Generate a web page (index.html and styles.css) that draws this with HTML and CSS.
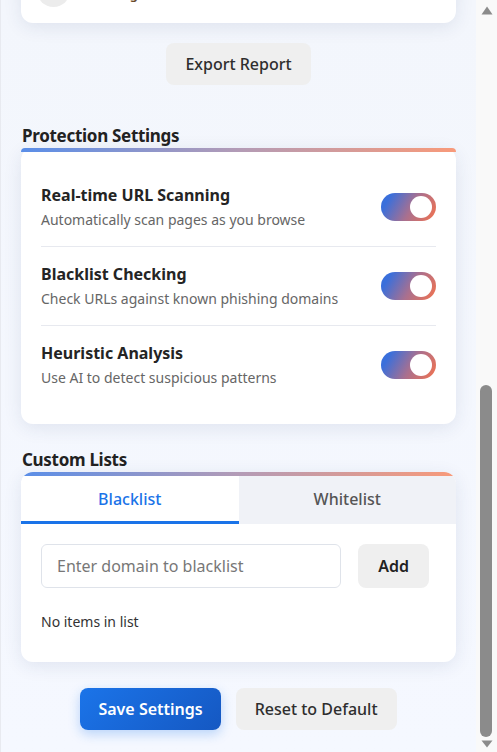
FILE: index.html
```html
<!DOCTYPE html>
<html lang="en">
<head>
<meta charset="utf-8">
<title>PhishGuard</title>
<link rel="stylesheet" href="styles.css">
</head>
<body>
<div class="scroller" id="scroller">
<div class="popup">
  <header class="header">
    <div class="brand">
      <svg class="brand-logo" width="36" height="36" viewBox="0 0 24 24"><path d="M12 2l8 3v6c0 5-3.5 9.5-8 11-4.5-1.5-8-6-8-11V5l8-3z" fill="#fff"/></svg>
      <div>
        <div class="brand-name">PhishGuard</div>
        <div class="brand-sub">Phishing protection</div>
      </div>
    </div>
  </header>

  <section class="card status-card">
    <div class="status-icon">✓</div>
    <div class="status-title">You are protected</div>
    <div class="status-sub">All protection features are active</div>
  </section>

  <div class="stats">
    <div class="stat card"><div class="stat-num">128</div><div class="stat-label">Sites scanned</div></div>
    <div class="stat card"><div class="stat-num">3</div><div class="stat-label">Threats blocked</div></div>
    <div class="stat card"><div class="stat-num">1</div><div class="stat-label">Warnings</div></div>
  </div>

  <section class="section">
    <h2 class="section-title">Recent Activity</h2>
    <div class="card activity">
      <div class="activity-item">
        <div class="activity-icon"></div>
        <div class="activity-text"><div class="activity-name">secure-login-bank.com</div><div class="activity-meta blocked">Blocked · 5 min</div></div>
      </div>
      <div class="activity-item">
        <div class="activity-icon"></div>
        <div class="activity-text"><div class="activity-name">github.com</div><div class="activity-meta safe">Safe · 20 min</div></div>
      </div>
      <div class="activity-item">
        <div class="activity-icon"></div>
        <div class="activity-text"><div class="activity-name">free-prizes-now.net</div><div class="activity-meta warn">Warning · 1 hour</div></div>
      </div>
    </div>
  </section>

  <div class="center-row export-row">
    <button class="btn btn-secondary">Export Report</button>
  </div>

  <section class="section">
    <h2 class="section-title">Protection Settings</h2>
    <div class="card settings">
      <div class="setting-row">
        <div class="setting-text">
          <div class="setting-name">Real-time URL Scanning</div>
          <div class="setting-desc">Automatically scan pages as you browse</div>
        </div>
        <label class="toggle"><input type="checkbox" checked><span class="slider"></span></label>
      </div>
      <div class="setting-row">
        <div class="setting-text">
          <div class="setting-name">Blacklist Checking</div>
          <div class="setting-desc">Check URLs against known phishing domains</div>
        </div>
        <label class="toggle"><input type="checkbox" checked><span class="slider"></span></label>
      </div>
      <div class="setting-row">
        <div class="setting-text">
          <div class="setting-name">Heuristic Analysis</div>
          <div class="setting-desc">Use AI to detect suspicious patterns</div>
        </div>
        <label class="toggle"><input type="checkbox" checked><span class="slider"></span></label>
      </div>
    </div>
  </section>

  <section class="section lists-section">
    <h2 class="section-title">Custom Lists</h2>
    <div class="card lists">
      <div class="tabs">
        <button class="tab active">Blacklist</button>
        <button class="tab">Whitelist</button>
      </div>
      <div class="tab-content">
        <div class="add-row">
          <input class="domain-input" type="text" placeholder="Enter domain to blacklist">
          <button class="btn btn-secondary btn-add">Add</button>
        </div>
        <div class="empty">No items in list</div>
      </div>
    </div>
  </section>

  <div class="center-row footer-actions">
    <button class="btn btn-primary">Save Settings</button>
    <button class="btn btn-secondary">Reset to Default</button>
  </div>
</div>
</div>
<div class="vscroll" aria-hidden="true">
  <div class="vs-btn vs-up"><svg width="12" height="9" viewBox="0 0 12 9"><path d="M6 0.5L11.5 8.5H0.5Z" fill="#8b8b8b"/></svg></div>
  <div class="vs-track"><div class="vs-thumb" style="height: 352px"></div></div>
  <div class="vs-btn vs-down"><svg width="12" height="8" viewBox="0 0 12 8"><path d="M0.5 0.5H11.5L6 7.5Z" fill="#8b8b8b"/></svg></div>
</div>
<script src="script.js"></script>
</body>
</html>
```

FILE: styles.css
```css
* { box-sizing: border-box; }
html, body { height: 100%; }
body {
  margin: 0;
  overflow: hidden;
  display: flex;
  font-family: "Noto Sans", "Open Sans", sans-serif;
  color: #2a2a2a;
  background: #f4f7fd;
}
.scroller {
  flex: 1;
  min-width: 0;
  height: 100vh;
  overflow-y: auto;
  scrollbar-width: none;
  border-left: 1px solid #e8eaf0;
  background: linear-gradient(180deg, #f3f6fc 0%, #f5f8ff 100%);
}
.scroller::-webkit-scrollbar { display: none; }

.vscroll {
  flex: none;
  width: 21px;
  height: 100vh;
  display: flex;
  flex-direction: column;
  background: #f9f9f9;
}
.vs-btn { flex: none; display: flex; justify-content: center; padding-left: 1px; }
.vs-up { height: 16px; align-items: flex-start; padding-top: 6px; }
.vs-down { height: 15px; align-items: flex-start; padding-top: 3px; }
.vs-track {
  flex: 1;
  display: flex;
  flex-direction: column;
  justify-content: flex-end;
  padding: 0 5px 0 4px;
}
.vs-thumb { border-radius: 6px; background: #8b8b8b; }

.popup {
  display: flex;
  flex-direction: column;
  padding: 20px 20px 22px 20px;
}

.header {
  background: linear-gradient(135deg, #1a73e8, #f0876a);
  border-radius: 12px;
  padding: 20px;
  color: #fff;
  margin-bottom: 20px;
}
.brand { display: flex; align-items: center; gap: 12px; }
.brand-name { font-size: 20px; font-weight: 700; line-height: 26px; }
.brand-sub { font-size: 13px; opacity: .9; line-height: 18px; }

.card {
  position: relative;
  background: #fff;
  border-radius: 12px;
  box-shadow: 0 4px 18px rgba(40, 60, 110, 0.10);
}
.card::before {
  content: "";
  position: absolute;
  top: 0; left: 0; right: 0;
  height: 4px;
  border-radius: 12px 12px 0 0;
  background: linear-gradient(90deg, #5a8ee8 0%, #b39bb6 50%, #f89a7a 100%);
}
.status-card { padding: 28px 20px 24px; text-align: center; margin-bottom: 20px; }
.status-icon {
  width: 56px; height: 56px; margin: 0 auto 12px; border-radius: 50%;
  background: #e6f4ea; color: #1e8e3e; font-size: 28px; line-height: 56px;
}
.status-title { font-size: 18px; font-weight: 700; line-height: 24px; }
.status-sub { font-size: 14px; color: #666; line-height: 20px; margin-top: 4px; }

.stats { display: grid; grid-template-columns: repeat(3, 1fr); gap: 12px; margin-bottom: 4px; }
.stat { padding: 22px 8px 18px; text-align: center; }
.stat-num { font-size: 24px; font-weight: 700; line-height: 30px; color: #1a73e8; }
.stat-label { font-size: 12px; color: #666; line-height: 18px; }

.section { margin-top: 26px; }
.section-title {
  margin: 0 0 2px 1px;
  font-size: 17px;
  font-weight: 700;
  line-height: 20px;
  letter-spacing: -0.3px;
  color: #222;
}

.activity { padding: 20px 16px 16px; display: flex; flex-direction: column; gap: 14px; }
.activity-item { display: flex; align-items: flex-start; gap: 14px; }
.activity-icon { width: 33px; height: 33px; border-radius: 50%; background: #ececec; flex: none; }
.activity-text { margin-top: -6px; }
.activity-name { font-size: 14px; line-height: 18px; font-weight: 600; }
.activity-meta { font-size: 13px; line-height: 16px; font-weight: 600; }
.activity-meta.blocked { color: #d93025; }
.activity-meta.safe { color: #1e8e3e; }
.activity-meta.warn { color: #6b4a2a; }

.center-row { display: flex; justify-content: center; gap: 15px; }
.export-row { margin-top: 20px; margin-bottom: 15px; }

.btn {
  font-family: inherit;
  font-size: 16px;
  line-height: 22px;
  font-weight: 500;
  padding: 10px 19px;
  border: none;
  border-radius: 8px;
  cursor: pointer;
}
.btn-secondary { background: #efefef; color: #2e2e2e; }
.btn-primary {
  background: linear-gradient(135deg, #1b74e9 0%, #1558c2 100%);
  color: #fff;
  font-weight: 600;
  padding: 10px 18px;
  box-shadow: 0 4px 12px rgba(26, 115, 232, 0.28);
}

.settings { padding: 20px; }
.setting-row {
  display: flex;
  align-items: center;
  justify-content: space-between;
  padding: 16px 0;
  border-bottom: 1px solid #e7e9ef;
}
.setting-row:last-child { border-bottom: none; }
.setting-name { font-size: 16px; font-weight: 700; line-height: 22px; color: #242424; }
.setting-desc { font-size: 14px; line-height: 20px; color: #666; margin-top: 4px; }

.toggle { position: relative; width: 55px; height: 28px; flex: none; }
.toggle input { display: none; }
.slider {
  position: absolute;
  inset: 0;
  border-radius: 14px;
  background: linear-gradient(120deg, #3a6fdb 15%, #a9708f 55%, #ec7254 95%);
}
.slider::after {
  content: "";
  position: absolute;
  top: 3px;
  right: 4px;
  width: 22px;
  height: 22px;
  border-radius: 50%;
  background: #fff;
}

.lists-section { margin-top: 26px; }
.lists { padding-top: 4px; overflow: hidden; }
.tabs { display: grid; grid-template-columns: 1fr 1fr; }
.tab {
  font-family: inherit;
  font-size: 16px;
  line-height: 22px;
  font-weight: 500;
  padding: 12px 0 11px;
  border: none;
  border-bottom: 3px solid transparent;
  background: #f0f2f7;
  color: #555;
}
.tab.active { background: #fff; color: #1a73e8; border-bottom-color: #1a73e8; }
.tab-content { padding: 20px 20px 30px; }
.add-row { display: flex; gap: 17px; padding-right: 7px; }
.domain-input {
  flex: 1;
  min-width: 0;
  height: 44px;
  padding: 0 15px;
  border: 1px solid #dfe3ea;
  border-radius: 6px;
  font-family: inherit;
  font-size: 16px;
  color: #333;
  background: #fff;
}
.domain-input::placeholder { color: #777; }
.btn-add { padding: 11px 20px; font-weight: 600; color: #222; }
.empty { font-size: 14px; line-height: 20px; color: #333; margin-top: 24px; }

.footer-actions { margin-top: 26px; }
```

FILE: script.js
```js
function toBottom() {
  var s = document.getElementById('scroller');
  s.scrollTop = s.scrollHeight;
}
toBottom();
window.addEventListener('load', toBottom);
```
